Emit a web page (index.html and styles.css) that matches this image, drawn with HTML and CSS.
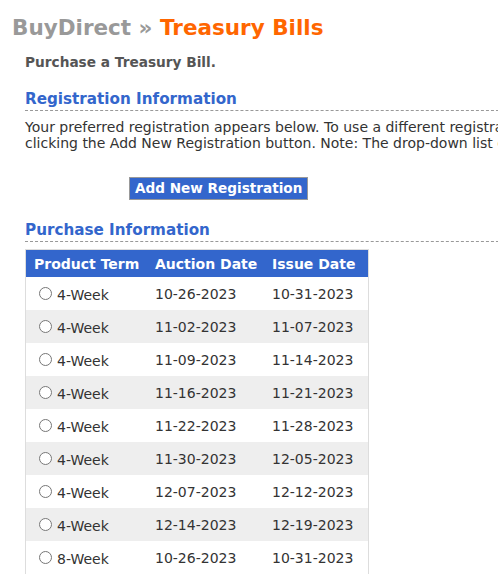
FILE: index.html
```html
<!DOCTYPE html>
<html lang="en">
<head>
    <meta charset="UTF-8">
    <title>BuyDirect - Treasury Bills</title>
    <link rel="stylesheet" href="styles.css">
</head>
<body>
    <!-- Page title -->
    <h1 class="page-title"><span class="crumb">BuyDirect &raquo;</span> <span class="current">Treasury Bills</span></h1>

    <div class="content">
        <p class="intro">Purchase a Treasury Bill.</p>

        <!-- Registration section -->
        <h2 class="section-title">Registration Information</h2>
        <p class="note">Your preferred registration appears below. To use a different registration, select one from the drop-down list or add a new registration by clicking the Add New Registration button. Note: The drop-down list contains only registrations that are eligible for this purchase.</p>
        <div class="button-row">
            <button class="btn-primary">Add New Registration</button>
        </div>

        <!-- Purchase section -->
        <h2 class="section-title">Purchase Information</h2>
        <table class="terms">
            <thead>
                <tr>
                    <th class="col-term">Product Term</th>
                    <th class="col-auction">Auction Date</th>
                    <th class="col-issue">Issue Date</th>
                </tr>
            </thead>
            <tbody>
                <tr><td><label><input type="radio" name="term">4-Week</label></td><td>10-26-2023</td><td>10-31-2023</td></tr>
                <tr><td><label><input type="radio" name="term">4-Week</label></td><td>11-02-2023</td><td>11-07-2023</td></tr>
                <tr><td><label><input type="radio" name="term">4-Week</label></td><td>11-09-2023</td><td>11-14-2023</td></tr>
                <tr><td><label><input type="radio" name="term">4-Week</label></td><td>11-16-2023</td><td>11-21-2023</td></tr>
                <tr><td><label><input type="radio" name="term">4-Week</label></td><td>11-22-2023</td><td>11-28-2023</td></tr>
                <tr><td><label><input type="radio" name="term">4-Week</label></td><td>11-30-2023</td><td>12-05-2023</td></tr>
                <tr><td><label><input type="radio" name="term">4-Week</label></td><td>12-07-2023</td><td>12-12-2023</td></tr>
                <tr><td><label><input type="radio" name="term">4-Week</label></td><td>12-14-2023</td><td>12-19-2023</td></tr>
                <tr><td><label><input type="radio" name="term">8-Week</label></td><td>10-26-2023</td><td>10-31-2023</td></tr>
            </tbody>
        </table>
    </div>
</body>
</html>
```

FILE: styles.css
```css
/* Base page */
body {
    margin: 0;
    font-family: "DejaVu Sans", Verdana, sans-serif;
    font-size: 14px;
    color: #333;
    background: #fff;
    overflow: hidden;
}

/* Title */
.page-title {
    margin: 0;
    padding: 14px 0 0 12px;
    font-size: 21.5px;
    line-height: 28px;
    font-weight: bold;
    white-space: nowrap;
}
.page-title .crumb {
    color: #999;
}
.page-title .current {
    color: #ff6600;
}

/* Wide content area, the page is cut by the window on the right */
.content {
    padding-left: 25px;
    width: 980px;
}

.intro {
    margin: 11px 0 0;
    font-size: 13.7px;
    font-weight: bold;
    color: #555;
    line-height: 18px;
}

/* Section headings with dashed rule */
.section-title {
    margin: 19px 0 0;
    font-size: 15.2px;
    line-height: 18px;
    color: #3366cc;
    padding-bottom: 2px;
    border-bottom: 1px dashed #999;
}

.note {
    margin: 8px 0 0;
    line-height: 16px;
    width: 960px;
}

.button-row {
    padding: 26px 0 0 104px;
}
.btn-primary {
    background: #3366cc;
    color: #fff;
    font-family: inherit;
    font-weight: bold;
    font-size: 13.6px;
    border: 1px solid #999;
    padding: 2px 5px;
    line-height: 17px;
    cursor: pointer;
}
.button-row + .section-title {
    margin-top: 21px;
}

/* Terms table */
.terms {
    margin-top: 7px;
    border-collapse: collapse;
    border: 1px solid #ddd;
}
.terms th {
    background: #3366cc;
    color: #fff;
    text-align: left;
    height: 27px;
    padding: 0 0 0 8px;
    white-space: nowrap;
}
.terms .col-term {
    width: 113px;
}
.terms .col-auction {
    width: 109px;
}
.terms .col-issue {
    width: 96px;
}
.terms td {
    height: 33px;
    padding: 0 0 0 8px;
    white-space: nowrap;
    vertical-align: middle;
}
.terms tbody tr:nth-child(even) {
    background: #eee;
}
.terms input[type="radio"] {
    margin: 3px 5px 0 5px;
}
```
